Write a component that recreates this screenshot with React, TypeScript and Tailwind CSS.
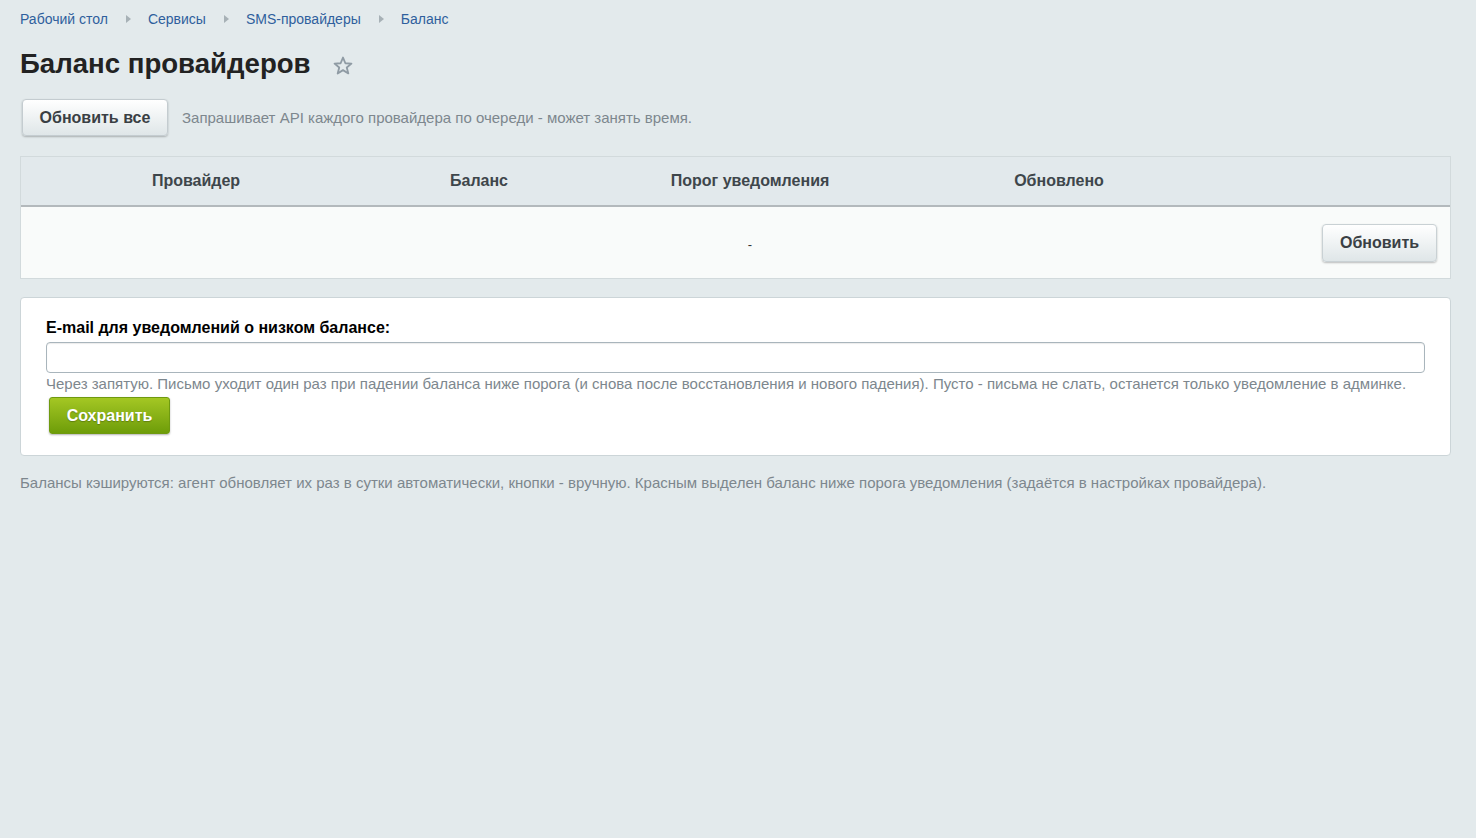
import React from "react";

const font = { fontFamily: '"Liberation Sans", Arial, sans-serif' };

function Arrow() {
  return (
    <svg width="6" height="8" viewBox="0 0 6 8" className="mx-[17px]">
      <path d="M1 0 L6 4 L1 8 Z" fill="#a7b1b6" />
    </svg>
  );
}

function Star() {
  return (
    <svg width="22" height="22" viewBox="0 0 24 24" className="ml-[21px] mt-[3px]">
      <path
        d="M12 2.8 L14.6 9 L21.2 9.4 L16.1 13.6 L17.8 20.1 L12 16.5 L6.2 20.1 L7.9 13.6 L2.8 9.4 L9.4 9 Z"
        fill="none"
        stroke="#8f9ba4"
        strokeWidth="2"
        strokeLinejoin="round"
      />
    </svg>
  );
}

export default function App() {
  return (
    <div className="min-h-[838px] w-full bg-[#e3eaec] text-[#333]" style={font}>
      <div className="pl-[20px] pr-[25px] pt-[11px]">
        <div className="flex items-center text-[14px] text-[#2f5f9d] h-[16px]">
          <span>Рабочий стол</span>
          <Arrow />
          <span>Сервисы</span>
          <Arrow />
          <span>SMS-провайдеры</span>
          <Arrow />
          <span>Баланс</span>
        </div>
        <div className="flex items-center mt-[21px] h-[32px]">
          <h1 className="text-[27.6px] font-bold text-[#222] leading-[32px]">Баланс провайдеров</h1>
          <Star />
        </div>
        <div className="flex items-center mt-[19px]">
          <button className="ml-[2px] h-[37px] w-[146px] rounded-[4px] border border-[#c4ccd0] bg-gradient-to-b from-[#ffffff] to-[#dfe6e8] shadow-[0_1px_2px_rgba(0,0,0,0.25)] text-[16px] font-bold text-[#3a3f44]">
            Обновить все
          </button>
          <span className="ml-[14px] text-[15px] text-[#7d878e] mt-[2px]">
            Запрашивает API каждого провайдера по очереди - может занять время.
          </span>
        </div>

        <div className="mt-[20px] border border-[#d2dadc] bg-[#f9fbfa]">
          <table className="w-full border-collapse table-fixed">
            <colgroup>
              <col className="w-[350px]" />
              <col className="w-[216px]" />
              <col className="w-[326px]" />
              <col className="w-[292px]" />
              <col />
            </colgroup>
            <thead>
              <tr className="h-[49px] bg-[#e2e9ec] border-b-2 border-[#b3b9bc]">
                <th className="text-[16px] font-bold text-[#3e464b] text-center">Провайдер</th>
                <th className="text-[16px] font-bold text-[#3e464b] text-center">Баланс</th>
                <th className="text-[16px] font-bold text-[#3e464b] text-center">Порог уведомления</th>
                <th className="text-[16px] font-bold text-[#3e464b] text-center">Обновлено</th>
                <th></th>
              </tr>
            </thead>
            <tbody>
              <tr className="h-[72px]">
                <td></td>
                <td></td>
                <td className="text-center text-[13px] text-[#333] pt-[4px]">-</td>
                <td></td>
                <td className="text-right pr-[13px]">
                  <button className="h-[38px] w-[115px] rounded-[4px] border border-[#c9d1d4] bg-gradient-to-b from-[#ffffff] to-[#dfe6e8] shadow-[0_1px_2px_rgba(0,0,0,0.25)] text-[16px] font-bold text-[#3a3f44]">
                    Обновить
                  </button>
                </td>
              </tr>
            </tbody>
          </table>
        </div>

        <div className="mt-[18px] bg-white border border-[#ccd5d8] rounded-[4px] px-[25px] pt-[20px] pb-[21px]">
          <div className="text-[16px] font-bold text-black leading-[20px]">
            E-mail для уведомлений о низком балансе:
          </div>
          <input
            type="text"
            className="mt-[4px] block w-full h-[31px] border border-[#a9b5bc] rounded-[4px] bg-white outline-none shadow-[inset_0_1px_1px_rgba(0,0,0,0.08)]"
          />
          <div className="mt-[2px] text-[15px] text-[#7d878e] leading-[18px]">
            Через запятую. Письмо уходит один раз при падении баланса ниже порога (и снова после восстановления и нового падения). Пусто - письма не слать, останется только уведомление в админке.
          </div>
          <button className="mt-[4px] ml-[3px] h-[37px] w-[121px] rounded-[3px] border border-[#6f9a0f] bg-gradient-to-b from-[#a4c723] to-[#6e9d08] shadow-[0_1px_2px_rgba(0,0,0,0.3)] text-[16px] font-bold text-white [text-shadow:0_1px_1px_rgba(0,0,0,0.25)]">
            Сохранить
          </button>
        </div>

        <div className="mt-[16px] text-[15px] text-[#7d878e]">
          Балансы кэшируются: агент обновляет их раз в сутки автоматически, кнопки - вручную. Красным выделен баланс ниже порога уведомления (задаётся в настройках провайдера).
        </div>
      </div>
    </div>
  );
}
